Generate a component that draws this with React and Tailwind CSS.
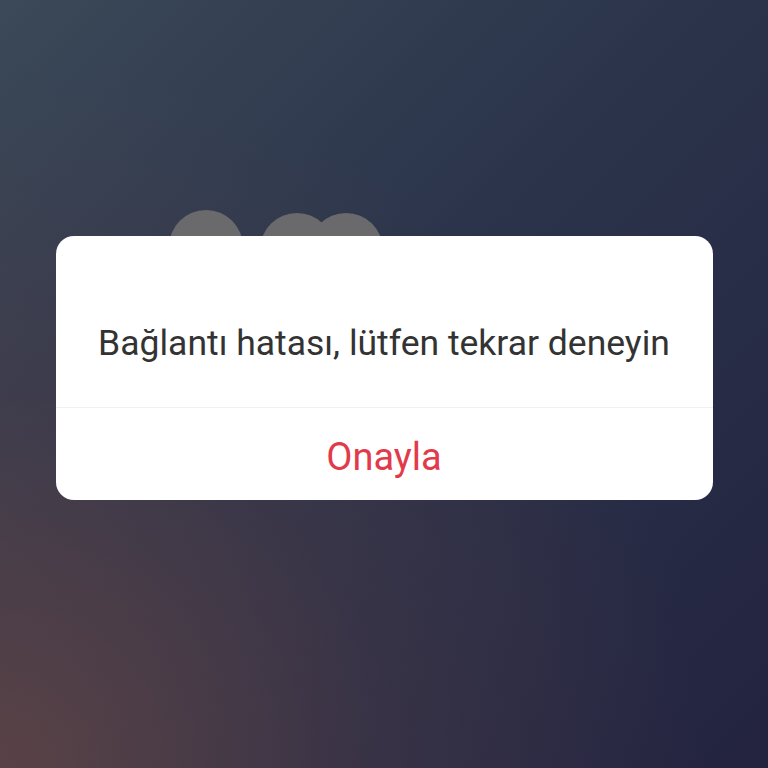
export default function App() {
  return (
    <div
      className="relative w-full h-screen overflow-hidden bg-[linear-gradient(135deg,#3b4958_0%,#2b344b_45%,#232340_100%)]"
      style={{ fontFamily: 'Roboto, "Noto Sans", sans-serif' }}
    >
      <div className="absolute inset-0 bg-[radial-gradient(circle_at_0%_100%,rgba(95,68,70,0.9)_0%,rgba(80,60,70,0.4)_35%,transparent_65%)]" />

      {/* blurred shapes peeking from behind the dialog */}
      <div className="absolute left-[169px] top-[210px] w-[74px] h-[74px] rounded-full bg-[#6a6a6c]" />
      <div className="absolute left-[260px] top-[213px] w-[74px] h-[74px] rounded-full bg-[#6a6a6c]" />
      <div className="absolute left-[309px] top-[213px] w-[74px] h-[74px] rounded-full bg-[#6a6a6c]" />

      <div className="relative flex h-full items-start justify-center pt-[236px]">
        <div className="w-[657px] h-[264px] bg-white rounded-[18px] flex flex-col overflow-hidden">
          <div className="h-[171px] flex items-center justify-center pt-[45px]">
            <p className="text-[35.5px] text-[#333333] whitespace-nowrap">Bağlantı hatası, lütfen tekrar deneyin</p>
          </div>
          <div className="h-px bg-[#f0f0f0]" />
          <button className="flex-1 flex items-center justify-center pt-[6px] text-[38px] text-[#e23a4b]">
            Onayla
          </button>
        </div>
      </div>
    </div>
  );
}
